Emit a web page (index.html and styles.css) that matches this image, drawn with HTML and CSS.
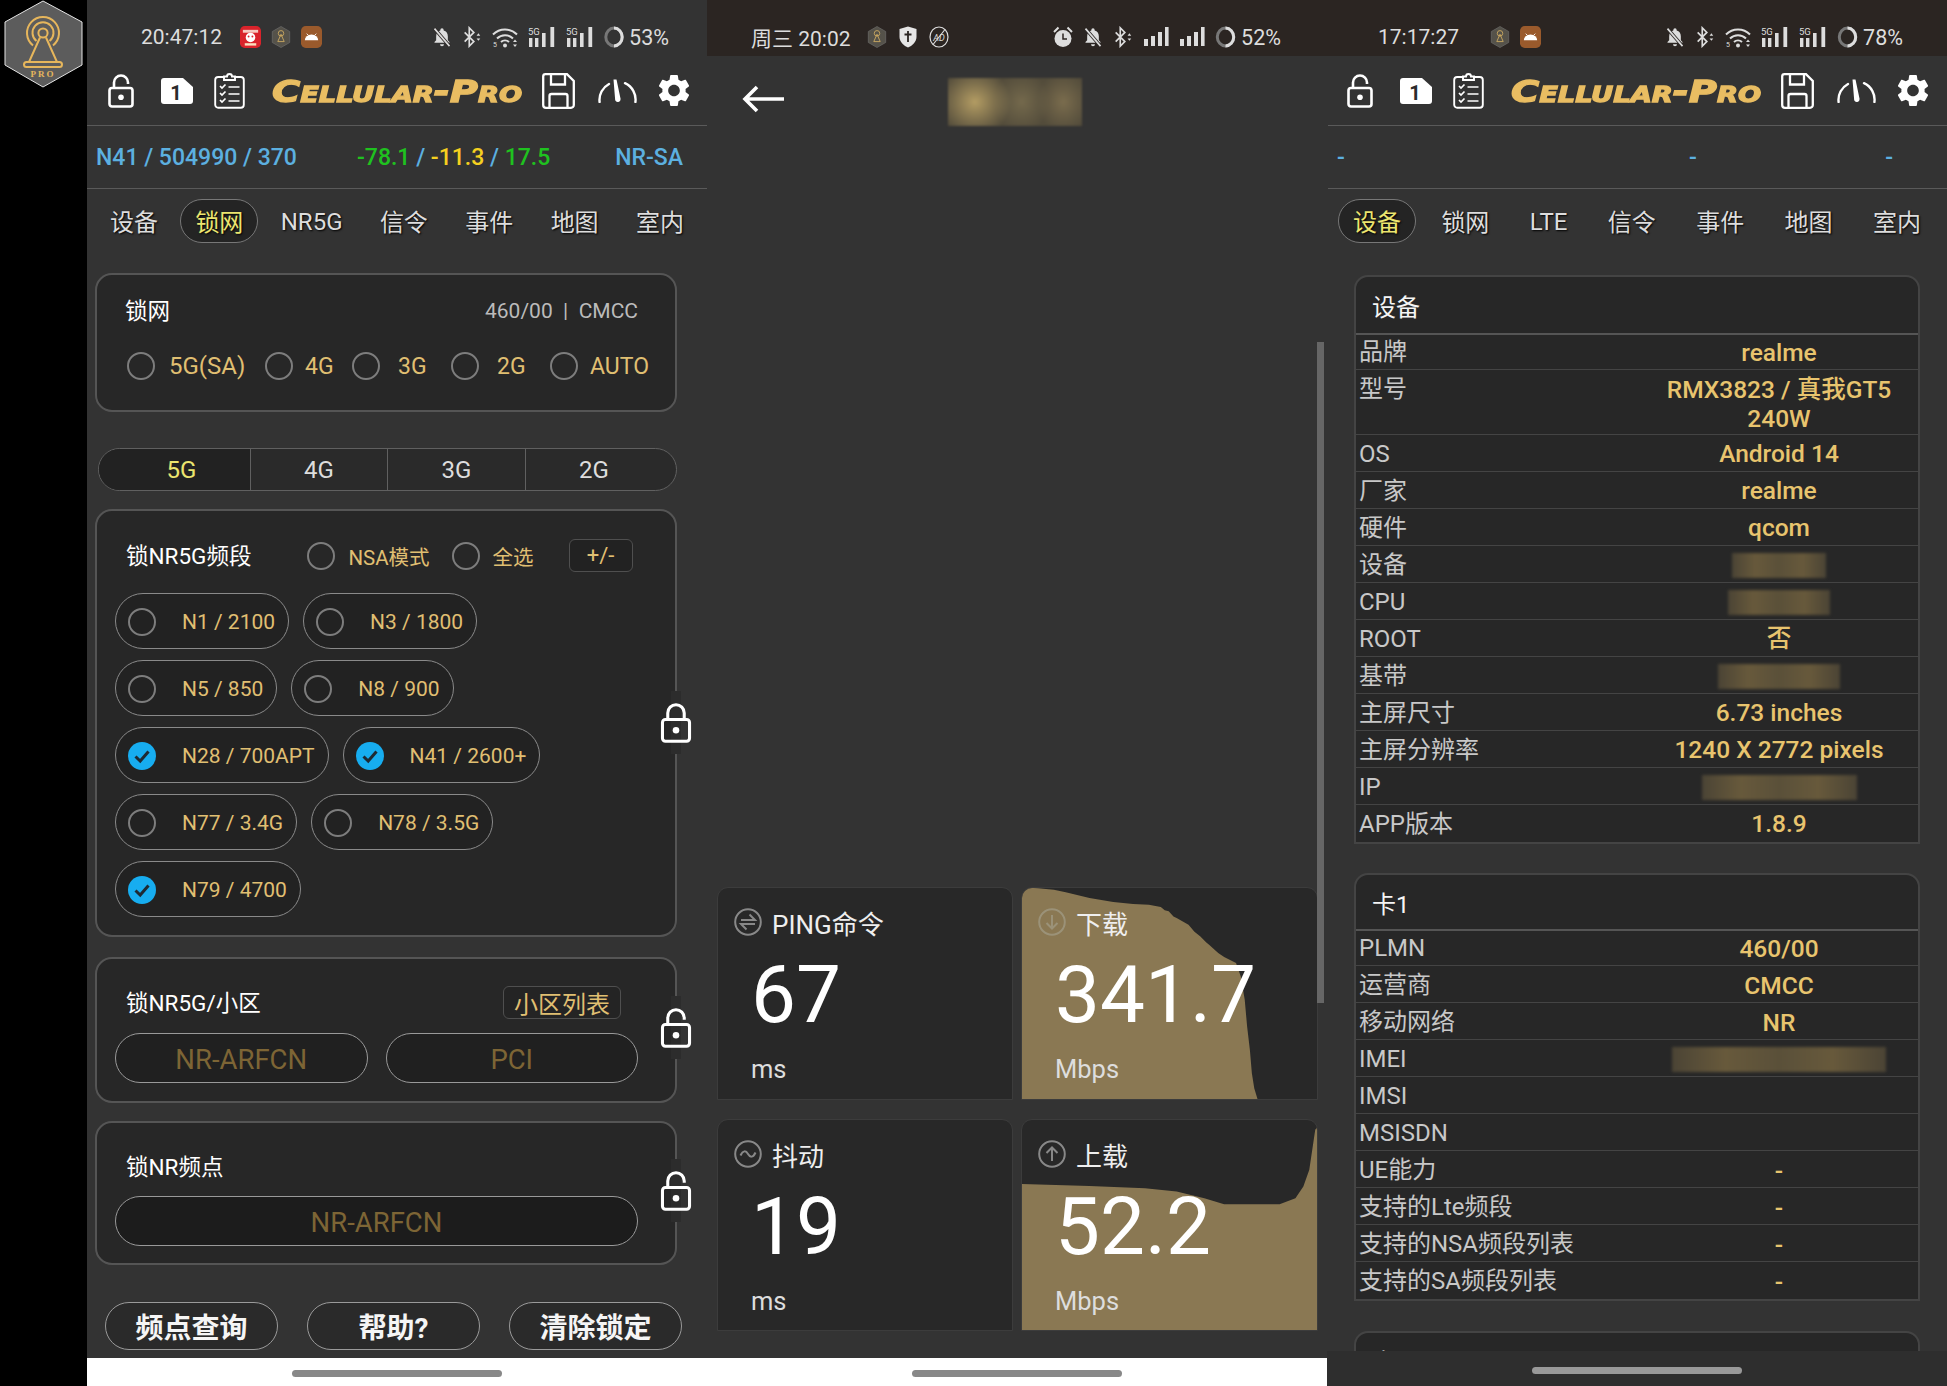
FILE: index.html
```html
<!DOCTYPE html>
<html lang="zh-CN">
<head>
<meta charset="utf-8">
<title>Cellular-Pro</title>
<link rel="stylesheet" href="styles.css">
</head>
<body>
<svg class="sprite" xmlns="http://www.w3.org/2000/svg">
  <symbol id="i-lock-open" viewBox="0 0 26 34"><rect x="1.5" y="14" width="23" height="18.5" rx="2.5" fill="none" stroke="currentColor" stroke-width="2.6"/><circle cx="13" cy="23.2" r="2.8" fill="currentColor"/><path d="M6 14V8.5a7 7 0 0 1 14 0V10" fill="none" stroke="currentColor" stroke-width="2.6"/></symbol>
  <symbol id="i-lock" viewBox="0 0 26 34"><rect x="1.5" y="14" width="23" height="18.5" rx="2.5" fill="none" stroke="currentColor" stroke-width="2.6"/><circle cx="13" cy="23.2" r="2.8" fill="currentColor"/><path d="M6 14V8.5a7 7 0 0 1 14 0V14" fill="none" stroke="currentColor" stroke-width="2.6"/></symbol>
  <symbol id="i-sim" viewBox="0 0 32 26"><path d="M3 0H22L32 9V23a3 3 0 0 1-3 3H3a3 3 0 0 1-3-3V3a3 3 0 0 1 3-3Z" fill="#fff"/><text x="15" y="21.5" font-family="Roboto" font-weight="700" font-size="20" text-anchor="middle" fill="#2b2b2b">1</text></symbol>
  <symbol id="i-clip" viewBox="0 0 31 37"><rect x="1.2" y="5" width="28.6" height="30.8" rx="3" fill="none" stroke="#fff" stroke-width="1.9"/><path d="M10 8V4.5h3a2.5 2.5 0 0 1 5 0h3V8Z" fill="#333" stroke="#fff" stroke-width="1.9"/><path d="M6 14l2 2 3.5-3.5M6 21l2 2 3.5-3.5M6 28l2 2 3.5-3.5" fill="none" stroke="#fff" stroke-width="1.7"/><path d="M14.5 15h11M14.5 22h11M14.5 29h11" stroke="#fff" stroke-width="1.7"/></symbol>
  <symbol id="i-save" viewBox="0 0 33 36"><path d="M3.5 1.2H25L31.8 8V32a2.8 2.8 0 0 1-2.8 2.8H4A2.8 2.8 0 0 1 1.2 32V3.5A2.3 2.3 0 0 1 3.5 1.2Z" fill="none" stroke="#fff" stroke-width="2.3"/><path d="M9 1.5V11.5H23V1.5M7.5 34.5V23a2 2 0 0 1 2-2H23.5a2 2 0 0 1 2 2V34.5" fill="none" stroke="#fff" stroke-width="2.3"/></symbol>
  <symbol id="i-gauge" viewBox="0 0 39 24"><path d="M1.6 23A18 18 0 0 1 11 5M27 4.2A18 18 0 0 1 37.4 23" fill="none" stroke="#fff" stroke-width="2.4" stroke-linecap="round"/><path d="M15.5 .6h3L22.6 20a2.8 2.8 0 0 1-5.4 1.2Z" fill="#fff"/></symbol>
  <symbol id="i-gear" viewBox="2.3 1.8 19.4 20.4"><path fill="#fff" d="M19.14 12.94c.04-.3.06-.61.06-.94 0-.32-.02-.64-.07-.94l2.03-1.58c.18-.14.23-.41.12-.61l-1.92-3.32c-.12-.22-.37-.29-.59-.22l-2.39.96c-.5-.38-1.03-.7-1.62-.94l-.36-2.54c-.04-.24-.24-.41-.48-.41h-3.84c-.24 0-.43.17-.47.41l-.36 2.54c-.59.24-1.13.57-1.62.94l-2.39-.96c-.22-.08-.47 0-.59.22L2.74 8.87c-.12.21-.08.47.12.61l2.03 1.58c-.05.3-.09.63-.09.94s.02.64.07.94l-2.03 1.58c-.18.14-.23.41-.12.61l1.92 3.32c.12.22.37.29.59.22l2.39-.96c.5.38 1.03.7 1.62.94l.36 2.54c.05.24.24.41.48.41h3.84c.24 0 .44-.17.47-.41l.36-2.54c.59-.24 1.13-.56 1.62-.94l2.39.96c.22.08.47 0 .59-.22l1.92-3.32c.12-.22.07-.47-.12-.61l-2.01-1.58zM12 15.6c-1.98 0-3.6-1.62-3.6-3.6s1.62-3.6 3.6-3.6 3.6 1.62 3.6 3.6-1.62 3.6-3.6 3.6z"/></symbol>
  <symbol id="i-bell" viewBox="0 0 24 24"><path fill="#ddd" d="M12 23a2.4 2.4 0 0 0 2.4-2.4H9.6A2.4 2.4 0 0 0 12 23Zm7-7v-5c0-3.3-1.7-5.9-5-6.7V3.5a2 2 0 0 0-4 0v.8C6.7 5.1 5 7.7 5 11v5l-2 2v1h18v-1Z"/><path d="M3 2l18 21" stroke="#2c2725" stroke-width="4"/><path d="M3 2l18 21" stroke="#ddd" stroke-width="2"/></symbol>
  <symbol id="i-bt" viewBox="0 0 20 24"><path d="M2 7L12 17L7 22V2L12 7L2 17" fill="none" stroke="#ddd" stroke-width="1.8"/><path d="M15 10.5h4L17 8ZM15 13.5h4L17 16Z" fill="#ddd"/></symbol>
  <symbol id="i-wifi" viewBox="0 0 26 22"><path d="M1 8.5a17 17 0 0 1 24 0M5 12.5a11.5 11.5 0 0 1 16 0M9 16a6 6 0 0 1 8 0" fill="none" stroke="#ddd" stroke-width="2"/><circle cx="13" cy="19.5" r="2" fill="#ddd"/><path d="M21 16h4l-2-2.6ZM21 18.5h4l-2 2.6Z" fill="#ddd"/><text x="1" y="21" font-family="Roboto" font-size="7" fill="#ddd">5</text></symbol>
  <symbol id="i-sig5" viewBox="0 0 28 22"><text x="0" y="8.5" font-family="Roboto" font-size="9.5" fill="#ddd">5G</text><path d="M1 12h3.4v9H1ZM7 12h3.4v9H7ZM14 7h3.6v14H14ZM22.4 1h3.8v20h-3.8Z" fill="#ddd"/></symbol>
  <symbol id="i-sig" viewBox="0 0 26 20"><path d="M1 12h4v7H1ZM8 9h4v10H8ZM15 5h4v14h-4ZM22 0h3.6v19H22Z" fill="#ddd"/></symbol>
  <symbol id="i-ring" viewBox="0 0 20 22"><ellipse cx="10" cy="11" rx="8.2" ry="9" fill="none" stroke="#777" stroke-width="3"/><path d="M10 2A8.2 9 0 0 1 10 20" fill="none" stroke="#ddd" stroke-width="3"/></symbol>
  <symbol id="i-hex" viewBox="0 0 20 24"><path d="M10 .5L19.5 6V18L10 23.5.5 18V6Z" fill="#55524a" stroke="#777" stroke-width=".6"/><circle cx="10" cy="8" r="3" fill="none" stroke="#c9a760" stroke-width="1"/><path d="M10 9L6.5 17H13.5Z" fill="none" stroke="#c9a760" stroke-width="1"/></symbol>
  <symbol id="i-android" viewBox="0 0 22 23"><rect width="22" height="23" rx="5" fill="#9a5a2c"/><path d="M4 15a7 6 0 0 1 14 0Z" fill="#fff"/><path d="M6 8l2 2M16 8l-2 2" stroke="#fff" stroke-width="1"/></symbol>
  <symbol id="i-red" viewBox="0 0 22 23"><rect width="22" height="23" rx="5" fill="#d9232b"/><rect x="3" y="4" width="16" height="3" fill="#f6c9c0"/><circle cx="11" cy="12" r="5" fill="#fff"/><circle cx="9" cy="11" r="1" fill="#d9232b"/><circle cx="13" cy="11" r="1" fill="#d9232b"/><rect x="5" y="18" width="12" height="2.5" fill="#fbe0c0"/></symbol>
  <symbol id="i-shield" viewBox="0 0 18 22"><path d="M9 .5L17.5 3V11C17.5 16 13 20 9 21.5 5 20 .5 16 .5 11V3Z" fill="#e6e6e6"/><path d="M9 5V16M5.5 8.5H12.5" stroke="#2b2522" stroke-width="1.8"/></symbol>
  <symbol id="i-noad" viewBox="0 0 20 22"><ellipse cx="10" cy="11" rx="9" ry="10" fill="none" stroke="#ddd" stroke-width="1.2"/><text x="10" y="14.5" font-family="Roboto" font-size="9" font-style="italic" text-anchor="middle" fill="#ddd">AD</text><path d="M16 3.5L4 18.5" stroke="#ddd" stroke-width="1.2"/></symbol>
  <symbol id="i-alarm" viewBox="0 0 20 22"><circle cx="10" cy="12.5" r="8.5" fill="#ddd"/><path d="M10 7.5V13H14" fill="none" stroke="#2b2522" stroke-width="1.5"/><path d="M1 6L5.5 1.5M19 6L14.5 1.5" stroke="#ddd" stroke-width="2"/></symbol>
  <symbol id="i-ping" viewBox="0 0 28 28"><circle cx="14" cy="14" r="12.8" fill="none" stroke="currentColor" stroke-width="2"/><path d="M7 12H21L15.5 6.5M21 16H7L12.5 21.5" fill="none" stroke="currentColor" stroke-width="2"/></symbol>
  <symbol id="i-jitter" viewBox="0 0 28 28"><circle cx="14" cy="14" r="12.8" fill="none" stroke="currentColor" stroke-width="2"/><path d="M6.5 15.5C9 10 12 10.5 14 14s5 4 7.5-1.5" fill="none" stroke="currentColor" stroke-width="2"/></symbol>
  <symbol id="i-down" viewBox="0 0 28 28"><circle cx="14" cy="14" r="12.8" fill="none" stroke="currentColor" stroke-width="2"/><path d="M14 7V20M8.5 15L14 20.5 19.5 15" fill="none" stroke="currentColor" stroke-width="2"/></symbol>
  <symbol id="i-up" viewBox="0 0 28 28"><circle cx="14" cy="14" r="12.8" fill="none" stroke="currentColor" stroke-width="2"/><path d="M14 21V8M8.5 13L14 7.5 19.5 13" fill="none" stroke="currentColor" stroke-width="2"/></symbol>
  <symbol id="i-check" viewBox="0 0 28 28"><circle cx="14" cy="14" r="14" fill="#17adf0"/><path d="M7.5 14.5L12.2 19 20.5 9.5" fill="none" stroke="#1e2a33" stroke-width="3"/></symbol>
</svg>

<aside class="rail">
  <svg class="rail-logo" viewBox="0 0 87 90" role="img" aria-label="Cellular-Pro">
    <polygon points="43,1 82,22 82,65 43,87 5,65 5,22" fill="#5c5c5c" stroke="#e4e4e4" stroke-width="1"/>
    <g fill="none" stroke="#e6b65c" stroke-width="2">
      <path d="M33 45.5A16 16 0 1 1 53 45.5"/>
      <path d="M36.5 41A10.5 10.5 0 1 1 49.5 41"/>
      <circle cx="43" cy="33" r="4.6"/>
      <path d="M40 37.5L29 62H57L46 37.5"/>
      <rect x="24" y="62" width="38" height="5" rx="2.5"/>
    </g>
    <text x="43" y="76.5" text-anchor="middle" font-family="Liberation Serif" font-weight="700" font-size="9" letter-spacing="2" fill="#e6b65c">PRO</text>
  </svg>
</aside>

<section class="panel">
  <div class="status status-a">
    <span class="clock">20:47:12</span>
    <span class="st-apps">
      <svg class="si si-w21"><use href="#i-red"/></svg>
      <svg class="si si-w20"><use href="#i-hex"/></svg>
      <svg class="si si-w21"><use href="#i-android"/></svg>
    </span>
    <span class="st-sys">
      <svg class="si si-w20"><use href="#i-bell"/></svg>
      <svg class="si si-w20"><use href="#i-bt"/></svg>
      <svg class="si si-w26"><use href="#i-wifi"/></svg>
      <svg class="si si-w28"><use href="#i-sig5"/></svg>
      <svg class="si si-w28"><use href="#i-sig5"/></svg>
      <svg class="si si-w20"><use href="#i-ring"/></svg>
      <span class="pct">53%</span>
    </span>
  </div>
  <header class="appbar">
    <svg class="ic ic-lock"><use href="#i-lock-open"/></svg>
    <svg class="ic ic-sim"><use href="#i-sim"/></svg>
    <svg class="ic ic-clip"><use href="#i-clip"/></svg>
    <span class="logo"><span class="logo-text">Cellular-Pro</span></span>
    <svg class="ic ic-save"><use href="#i-save"/></svg>
    <svg class="ic ic-gauge"><use href="#i-gauge"/></svg>
    <svg class="ic ic-gear"><use href="#i-gear"/></svg>
  </header>
  <div class="info info-a">
    <span class="blue">N41 / 504990 / 370</span>
    <span class="blue"><span class="green">-78.1</span> / <span class="yellow">-11.3</span> / <span class="green">17.5</span></span>
    <span class="blue">NR-SA</span>
  </div>
  <nav class="tabs tabs-a">
    <span class="tab">设备</span><span class="tab on">锁网</span><span class="tab tab-lat">NR5G</span><span class="tab">信令</span><span class="tab">事件</span><span class="tab">地图</span><span class="tab">室内</span>
  </nav>
  <main class="lockview">
    <div class="card card-net">
      <div class="net-head"><span class="ctitle">锁网</span><span class="plmn">460/00&nbsp; |&nbsp; CMCC</span></div>
      <div class="net-opts">
        <label class="opt opt-sa"><span class="radio"></span>5G(SA)</label>
        <label class="opt opt-n"><span class="radio"></span>4G</label>
        <label class="opt opt-w"><span class="radio"></span>3G</label>
        <label class="opt opt-w"><span class="radio"></span>2G</label>
        <label class="opt opt-n"><span class="radio"></span>AUTO</label>
      </div>
    </div>
    <div class="seg">
      <span class="seg-item seg-first">5G</span><span class="seg-item">4G</span><span class="seg-item">3G</span><span class="seg-item seg-last">2G</span>
    </div>
    <div class="card card-bands">
      <div class="bands-head">
        <span class="ctitle">锁NR5G频段</span>
        <label class="mini mini-nsa"><span class="radio"></span>NSA模式</label>
        <label class="mini"><span class="radio"></span>全选</label>
        <span class="plus">+/-</span>
      </div>
      <div class="chip-rows">
        <div class="chip-row"><span class="chip"><span class="radio"></span>N1 / 2100</span><span class="chip"><span class="radio"></span>N3 / 1800</span></div>
        <div class="chip-row"><span class="chip"><span class="radio"></span>N5 / 850</span><span class="chip"><span class="radio"></span>N8 / 900</span></div>
        <div class="chip-row"><span class="chip"><svg class="checked"><use href="#i-check"/></svg>N28 / 700APT</span><span class="chip"><svg class="checked"><use href="#i-check"/></svg>N41 / 2600+</span></div>
        <div class="chip-row"><span class="chip"><span class="radio"></span>N77 / 3.4G</span><span class="chip"><span class="radio"></span>N78 / 3.5G</span></div>
        <div class="chip-row"><span class="chip"><svg class="checked"><use href="#i-check"/></svg>N79 / 4700</span></div>
      </div>
      <span class="edge-lock"><svg class="edge-ic"><use href="#i-lock"/></svg></span>
    </div>
    <div class="card card-cell">
      <div class="cell-head"><span class="ctitle">锁NR5G/小区</span><span class="list-btn">小区列表</span></div>
      <div class="inputs"><span class="field">NR-ARFCN</span><span class="field">PCI</span></div>
      <span class="edge-lock edge-lock-up"><svg class="edge-ic"><use href="#i-lock-open"/></svg></span>
    </div>
    <div class="card card-freq">
      <div class="freq-head"><span class="ctitle">锁NR频点</span></div>
      <div class="inputs"><span class="field field-dark">NR-ARFCN</span></div>
      <span class="edge-lock edge-lock-up"><svg class="edge-ic"><use href="#i-lock-open"/></svg></span>
    </div>
    <div class="actions">
      <span class="action">频点查询</span><span class="action">帮助?</span><span class="action">清除锁定</span>
    </div>
  </main>
  <div class="nav nav-light"><span class="home"></span></div>
</section>

<section class="panel">
  <div class="status status-b status-dark">
    <span class="clock">周三 20:02</span>
    <span class="st-apps">
      <svg class="si si-w20"><use href="#i-hex"/></svg>
      <svg class="si si-w18"><use href="#i-shield"/></svg>
      <svg class="si si-w20"><use href="#i-noad"/></svg>
    </span>
    <span class="st-sys">
      <svg class="si si-w20"><use href="#i-alarm"/></svg>
      <svg class="si si-w20"><use href="#i-bell"/></svg>
      <svg class="si si-w20"><use href="#i-bt"/></svg>
      <svg class="si si-w26"><use href="#i-sig"/></svg>
      <svg class="si si-w26"><use href="#i-sig"/></svg>
      <svg class="si si-w21"><use href="#i-ring"/></svg>
      <span class="pct">52%</span>
    </span>
  </div>
  <div class="speed-bar">
    <svg class="back" viewBox="0 0 42 28"><path d="M42 14H4M15 2L3 14 15 26" fill="none" stroke="#fff" stroke-width="3.6"/></svg>
    <span class="speed-name"></span>
  </div>
  <div class="speed-space"></div>
  <div class="stats">
    <div class="stat">
      <div class="stat-head"><svg class="stat-ic"><use href="#i-ping"/></svg>PING命令</div>
      <div class="stat-num">67</div>
      <div class="stat-unit">ms</div>
    </div>
    <div class="stat">
      <svg class="area" viewBox="787 52 750 638" preserveAspectRatio="none"><polygon fill="#8a7853" points="787,52 830,56 870,60 900,68 960,85 1020,97 1070,103 1110,105 1140,112 1150,122 1160,125 1172,140 1180,145 1210,165 1225,186 1240,200 1255,218 1262,225 1285,250 1300,262 1310,268 1330,280 1342,320 1352,390 1358,470 1365,540 1370,610 1376,655 1385,690 787,690"/></svg>
      <div class="stat-head"><svg class="stat-ic stat-ic-faint"><use href="#i-down"/></svg>下载</div>
      <div class="stat-num">341.7</div>
      <div class="stat-unit">Mbps</div>
    </div>
    <div class="stat">
      <div class="stat-head"><svg class="stat-ic"><use href="#i-jitter"/></svg>抖动</div>
      <div class="stat-num">19</div>
      <div class="stat-unit">ms</div>
    </div>
    <div class="stat">
      <svg class="area area-low" viewBox="787 748 750 634" preserveAspectRatio="none"><polygon fill="#8a7853" points="787,942 960,948 1100,955 1180,965 1250,985 1300,1003 1380,1003 1440,1003 1480,985 1500,950 1515,900 1530,780 1537,770 1537,1382 787,1382"/></svg>
      <div class="stat-head"><svg class="stat-ic"><use href="#i-up"/></svg>上载</div>
      <div class="stat-num">52.2</div>
      <div class="stat-unit">Mbps</div>
    </div>
  </div>
  <span class="scrollbar"></span>
  <div class="nav nav-light"><span class="home"></span></div>
</section>

<section class="panel">
  <div class="status status-c status-dark">
    <span class="clock">17:17:27</span>
    <span class="st-apps st-apps-c">
      <svg class="si si-w20"><use href="#i-hex"/></svg>
      <svg class="si si-w21"><use href="#i-android"/></svg>
    </span>
    <span class="st-sys">
      <svg class="si si-w20"><use href="#i-bell"/></svg>
      <svg class="si si-w20"><use href="#i-bt"/></svg>
      <svg class="si si-w26"><use href="#i-wifi"/></svg>
      <svg class="si si-w28"><use href="#i-sig5"/></svg>
      <svg class="si si-w28"><use href="#i-sig5"/></svg>
      <svg class="si si-w21"><use href="#i-ring"/></svg>
      <span class="pct">78%</span>
    </span>
  </div>
  <header class="appbar appbar-c">
    <svg class="ic ic-lock"><use href="#i-lock-open"/></svg>
    <svg class="ic ic-sim"><use href="#i-sim"/></svg>
    <svg class="ic ic-clip"><use href="#i-clip"/></svg>
    <span class="logo"><span class="logo-text">Cellular-Pro</span></span>
    <svg class="ic ic-save"><use href="#i-save"/></svg>
    <svg class="ic ic-gauge"><use href="#i-gauge"/></svg>
    <svg class="ic ic-gear"><use href="#i-gear"/></svg>
  </header>
  <div class="info info-c">
    <span class="blue">-</span><span class="blue">-</span><span class="blue">-</span>
  </div>
  <nav class="tabs tabs-c">
    <span class="tab on">设备</span><span class="tab">锁网</span><span class="tab tab-lat">LTE</span><span class="tab">信令</span><span class="tab">事件</span><span class="tab">地图</span><span class="tab">室内</span>
  </nav>
  <main class="devview">
    <div class="tbl tbl-device">
      <div class="tbl-title">设备</div>
      <div class="row row-first"><span class="k">品牌</span><span class="v">realme</span></div>
      <div class="row row-tall"><span class="k">型号</span><span class="v v-wrap">RMX3823 / 真我GT5<br>240W</span></div>
      <div class="row"><span class="k">OS</span><span class="v">Android 14</span></div>
      <div class="row"><span class="k">厂家</span><span class="v">realme</span></div>
      <div class="row"><span class="k">硬件</span><span class="v">qcom</span></div>
      <div class="row"><span class="k">设备</span><span class="v"><span class="smudge sm-94"></span></span></div>
      <div class="row"><span class="k">CPU</span><span class="v"><span class="smudge sm-102"></span></span></div>
      <div class="row"><span class="k">ROOT</span><span class="v">否</span></div>
      <div class="row"><span class="k">基带</span><span class="v"><span class="smudge sm-122"></span></span></div>
      <div class="row"><span class="k">主屏尺寸</span><span class="v">6.73 inches</span></div>
      <div class="row"><span class="k">主屏分辨率</span><span class="v">1240 X 2772 pixels</span></div>
      <div class="row"><span class="k">IP</span><span class="v"><span class="smudge sm-155"></span></span></div>
      <div class="row row-last"><span class="k">APP版本</span><span class="v">1.8.9</span></div>
    </div>
    <div class="tbl tbl-sim">
      <div class="tbl-title">卡1</div>
      <div class="row row-first"><span class="k">PLMN</span><span class="v">460/00</span></div>
      <div class="row"><span class="k">运营商</span><span class="v">CMCC</span></div>
      <div class="row"><span class="k">移动网络</span><span class="v">NR</span></div>
      <div class="row"><span class="k">IMEI</span><span class="v"><span class="smudge sm-214"></span></span></div>
      <div class="row"><span class="k">IMSI</span><span class="v"></span></div>
      <div class="row"><span class="k">MSISDN</span><span class="v"></span></div>
      <div class="row"><span class="k">UE能力</span><span class="v">-</span></div>
      <div class="row"><span class="k">支持的Lte频段</span><span class="v">-</span></div>
      <div class="row"><span class="k">支持的NSA频段列表</span><span class="v">-</span></div>
      <div class="row row-end"><span class="k">支持的SA频段列表</span><span class="v">-</span></div>
    </div>
    <div class="tbl tbl-next">
      <div class="tbl-title">卡2</div>
    </div>
  </main>
  <div class="nav nav-dark"><span class="home home-c"></span></div>
</section>
</body>
</html>
```
FILE: styles.css
```css
* { box-sizing: border-box; }
html, body { margin: 0; padding: 0; }
body {
  width: 1947px;
  height: 1386px;
  overflow: hidden;
  display: flex;
  background: #000;
  font-family: Roboto, "Noto Sans CJK SC", sans-serif;
  color: #fff;
}
.sprite { display: none; }

.rail { width: 87px; flex: none; background: #000; }
.rail-logo { display: block; width: 87px; height: 90px; }

.panel {
  position: relative;
  width: 620px;
  height: 1386px;
  flex: none;
  display: flex;
  flex-direction: column;
  background: #333;
}

/* status bar */
.status { height: 56px; flex: none; display: flex; align-items: center; padding-top: 18px; color: #ddd; font-size: 21px; }
.status-dark { background: #2b2522; }
.status-a { padding-left: 54px; padding-right: 38px; }
.status-b { padding-left: 44px; padding-right: 46px; }
.status-c { padding-left: 51px; padding-right: 44px; }
.clock { white-space: nowrap; }
.st-apps { display: flex; align-items: center; gap: 10px; margin-left: 18px; }
.st-apps-c { margin-left: 31px; }
.status-b .st-apps { margin-left: 16px; gap: 12px; }
.st-sys { display: flex; align-items: center; gap: 10px; margin-left: auto; }
.pct { margin-left: -5px; font-size: 21.5px; }
.si { display: block; height: 22px; flex: none; }
.si-w18 { width: 18px; }
.si-w20 { width: 20px; }
.si-w21 { width: 21px; }
.si-w26 { width: 26px; }
.si-w28 { width: 28px; }

/* app bar */
.appbar {
  height: 70px;
  flex: none;
  display: flex;
  align-items: center;
  padding: 0 0 0 21px;
  border-bottom: 1px solid #5a5a5a;
}
.appbar-c { padding-left: 19px; margin-left: 1px; }
.ic { display: block; flex: none; color: #fff; }
.ic-lock { width: 26px; height: 34px; }
.ic-sim { width: 32px; height: 26px; margin-left: 27px; }
.ic-clip { width: 31px; height: 37px; margin-left: 21px; }
.ic-save { width: 33px; height: 36px; margin-left: 19px; }
.ic-gauge { width: 39px; height: 24px; margin-left: 23px; }
.ic-gear { width: 32px; height: 33px; margin-left: 21px; }
.logo { display: block; width: 251px; height: 30px; margin-left: 27px; flex: none; }
.logo-text {
  display: inline-block;
  font-family: "DejaVu Sans", sans-serif;
  font-style: italic;
  font-weight: 700;
  font-variant: small-caps;
  font-size: 31px;
  line-height: 30px;
  color: #e9bd62;
  -webkit-text-stroke: 1.3px #e9bd62;
  transform: scaleX(1.24);
  transform-origin: left center;
  white-space: nowrap;
}

/* info line */
.info {
  height: 63px;
  flex: none;
  display: grid;
  align-items: center;
  font-size: 23px;
  font-weight: 500;
  border-bottom: 1px solid #5a5a5a;
}
.info-a { grid-template-columns: 261px 1fr auto; padding: 0 24px 0 9px; }
.info-c { grid-template-columns: 352px 1fr auto; padding: 0 54px 0 9px; margin-left: 1px; }
.blue { color: #5cb0e0; }
.green { color: #1fc21f; }
.yellow { color: #f5d020; }

/* tabs */
.tabs { flex: none; display: flex; justify-content: space-between; margin-top: 10px; height: 44px; }
.tabs-a { padding: 0 8px 0 8px; }
.tabs-c { padding: 0 11px 0 11px; }
.tab {
  display: flex;
  align-items: center;
  padding: 0 14px 1px;
  border: 1px solid transparent;
  border-radius: 22px;
  font-size: 24px;
  color: #ddd;
  text-shadow: 1px 1px 2px #000;
}
.tab-lat { padding: 1px 14px 0; }
.tab.on { background: #242424; border-color: #777; color: #ece56f; }

/* lock view */
.lockview { flex: 1; padding: 30px 0 0 8px; min-height: 0; }
.card { position: relative; width: 582px; background: #272727; border: 2px solid #555; border-radius: 17px; }
.ctitle { font-size: 22.5px; line-height: 30px; white-space: nowrap; }

.card-net { height: 139px; padding: 21px 27px 0 28px; }
.net-head { display: flex; justify-content: space-between; align-items: center; padding-right: 10px; }
.plmn { font-size: 21px; color: #bbb; }
.net-opts { display: grid; grid-template-columns: 138px 87px 99px 99px auto; margin-top: 26px; margin-left: 2px; }
.opt { display: flex; align-items: center; gap: 14px; font-size: 23px; color: #e0bf72; white-space: nowrap; }
.opt-sa { font-size: 24px; }
.opt-n { gap: 12px; }
.opt-w { gap: 18px; }
.radio { display: block; width: 28px; height: 28px; flex: none; border: 2px solid #7d7d7d; border-radius: 50%; }

.seg {
  display: grid;
  grid-template-columns: 152px 137px 138px 152px;
  height: 43px;
  margin: 36px 0 18px 3px;
  width: 579px;
  background: #2a2a2a;
  border: 1px solid #606060;
  border-radius: 22px;
  overflow: hidden;
}
.seg-item { display: flex; align-items: center; justify-content: center; font-size: 24px; color: #ddd; border-right: 1px solid #606060; }
.seg-first { background: #222; color: #ece56f; padding-left: 14px; }
.seg-last { border-right: 0; padding-right: 16px; }

.card-bands { height: 428px; padding: 28px 0 0 18px; }
.bands-head { display: flex; align-items: center; height: 33px; margin-bottom: 21px; padding-left: 11px; }
.mini { display: flex; align-items: center; gap: 13px; font-size: 20.5px; color: #e0bf72; white-space: nowrap; }
.mini-nsa { margin: 0 22px 0 56px; }
.plus { display: flex; align-items: center; justify-content: center; width: 64px; height: 33px; margin-left: 35px; background: #222; border: 1px solid #4f4f4f; border-radius: 6px; font-size: 22px; color: #e0bf72; }
.chip-rows { display: flex; flex-direction: column; gap: 11px; }
.chip-row { display: flex; gap: 14px; }
.chip {
  display: flex;
  align-items: center;
  gap: 26px;
  height: 56px;
  padding: 1px 13px 0 12px;
  background: #222;
  border: 1px solid #8a8a8a;
  border-radius: 28px;
  font-size: 21px;
  color: #e0bf72;
  white-space: nowrap;
}
.checked { display: block; width: 28px; height: 28px; flex: none; }

.edge-lock {
  position: absolute;
  top: 50%;
  right: -6px;
  width: 10px;
  height: 63px;
  margin-top: -32px;
  background: #2c2c2c;
  display: flex;
  align-items: center;
  justify-content: center;
}
.edge-lock-up { margin-top: -34px; }
.edge-ic { display: block; flex: none; width: 32px; height: 40px; color: #fff; }

.card-cell { height: 146px; margin-top: 20px; padding: 27px 37px 0 18px; }
.cell-head { display: flex; justify-content: space-between; align-items: center; height: 33px; padding: 0 17px 0 11px; }
.list-btn { display: flex; align-items: center; height: 33px; padding: 0 10px; background: #242424; border: 1px solid #4f4f4f; border-radius: 6px; font-size: 24px; color: #e0bf72; }
.inputs { display: flex; gap: 18px; margin-top: 14px; }
.field {
  flex: 1;
  height: 50px;
  padding-top: 2px;
  display: flex;
  align-items: center;
  justify-content: center;
  background: #202020;
  border: 1px solid #999;
  border-radius: 25px;
  font-size: 27.5px;
  color: #7d6535;
}
.field-dark { background: #1c1c1c; }

.card-freq { height: 144px; margin-top: 18px; padding: 29px 37px 0 18px; }
.freq-head { padding-left: 11px; height: 30px; display: flex; align-items: center; }

.actions { display: flex; gap: 29px; margin: 37px 0 0 10px; }
.action {
  width: 173px;
  height: 48px;
  display: flex;
  align-items: center;
  justify-content: center;
  background: #2a2a2a;
  border: 1px solid #9a9a9a;
  border-radius: 24px;
  font-size: 28px;
  font-weight: 700;
  color: #f5f5f5;
}

/* nav */
.nav { flex: none; display: flex; justify-content: center; padding-top: 12px; }
.nav-light { height: 28px; background: #fff; }
.nav-dark { height: 35px; padding-top: 16px; background: #2e2e2e; }
.home { display: block; width: 210px; height: 7px; border-radius: 4px; background: #888; }
.home-c { background: #999; }

/* speed test */
.speed-bar { height: 86px; flex: none; display: flex; align-items: center; padding-left: 35px; }
.back { display: block; width: 42px; height: 28px; flex: none; }
.speed-name {
  display: block;
  width: 134px;
  height: 48px;
  margin: 6px 0 0 164px;
  background:
    radial-gradient(ellipse 36px 34px at 20% 50%, #b39c63, rgba(179,156,99,0) 100%),
    radial-gradient(ellipse 28px 30px at 55% 50%, #74694c, rgba(116,105,76,0) 100%),
    radial-gradient(ellipse 26px 30px at 86% 50%, #7a6c4d, rgba(122,108,77,0) 100%),
    #534c3b;
  filter: blur(1px);
}
.speed-space { flex: 1; }
.stats {
  flex: none;
  display: grid;
  grid-template-columns: 296px 297px;
  grid-template-rows: 213px 212px;
  gap: 19px 8px;
  margin: 0 0 27px 10px;
}
.stat { position: relative; background: #282828; border: 1px solid #3c3c3c; border-radius: 11px 11px 0 0; overflow: hidden; }
.area { position: absolute; left: -1px; top: -1px; width: 297px; height: 213px; display: block; }
.area-low { height: 212px; }
.stat-head { position: relative; display: flex; align-items: center; gap: 10px; height: 30px; margin: 19px 0 0 16px; font-size: 26px; color: #eee; }
.stat-ic { display: block; width: 28px; height: 28px; flex: none; color: #888; }
.stat-ic-faint { color: #9b9278; }
.stat-num { position: relative; margin: 13px 0 0 33px; font-size: 80px; line-height: 90px; color: #fff; }
.stat-unit { position: relative; margin: 14px 0 0 33px; font-size: 25.5px; line-height: 30px; color: #ddd; }
.scrollbar { position: absolute; right: 3px; top: 342px; width: 7px; height: 661px; background: #666; }

/* device view */
.devview { flex: 1; min-height: 0; overflow: hidden; padding: 32px 27px 0; }
.tbl { background: #272727; border: 2px solid #444; border-radius: 14px 14px 0 0; margin-bottom: 30px; }
.tbl-device { margin-bottom: 29px; }
.tbl-title { display: flex; align-items: center; padding-left: 16px; font-size: 24px; color: #f5f5f5; border-bottom: 2px solid #555; }
.tbl-device .tbl-title { height: 58px; }
.tbl-sim .tbl-title { height: 56px; }
.tbl-next .tbl-title { height: 57px; }
.row { display: grid; grid-template-columns: 1fr 1fr; height: 37px; line-height: 38px; border-bottom: 1px solid #444; font-size: 24px; }
.tbl-sim .row { line-height: 39px; }
.row-first, .tbl-sim .row-first { height: 35px; line-height: 35px; }
.row-tall { height: 65px; }
.row-last { border-bottom: 0; }
.row-end { border-bottom: 0; }
.k { padding-left: 3px; color: #c8c8c8; white-space: nowrap; }
.v { display: flex; justify-content: center; align-items: center; height: 100%; padding: 0 0 0 3px; font-size: 24.5px; font-weight: 500; color: #e8c46e; text-align: center; white-space: nowrap; }
.v-wrap { display: block; padding-top: 5px; line-height: 29px; }
.smudge {
  display: block;
  height: 25px;
  background: linear-gradient(90deg, #4b4435, #67593b 25%, #5a5039 50%, #67593b 75%, #4b4435);
  filter: blur(1.5px);
}
.sm-94 { width: 94px; }
.sm-102 { width: 102px; }
.sm-122 { width: 122px; }
.sm-155 { width: 155px; }
.sm-214 { width: 214px; }
```
